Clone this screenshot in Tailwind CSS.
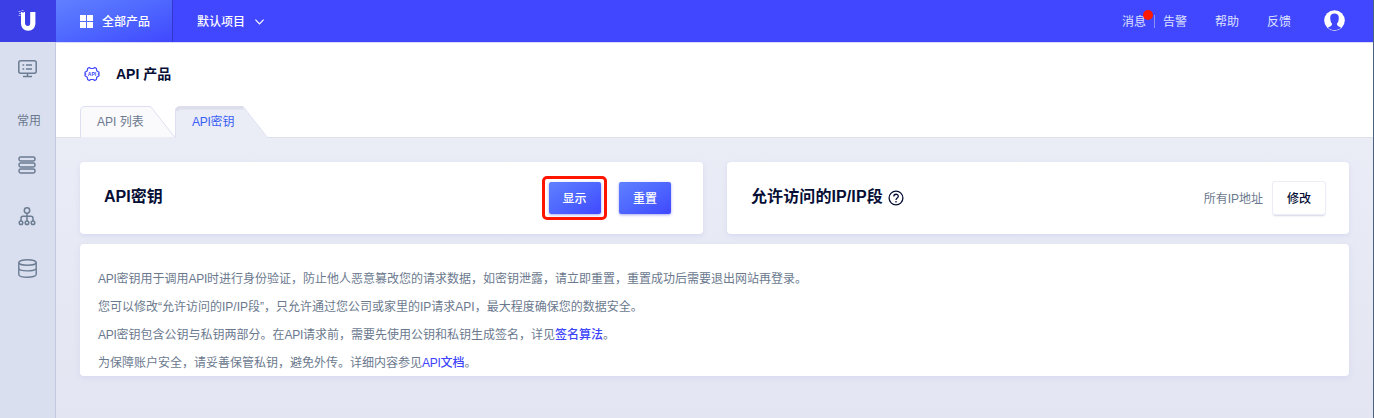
<!DOCTYPE html>
<html lang="zh-CN">
<head>
<meta charset="utf-8">
<title>API 产品</title>
<script src="https://cdn.jsdelivr.net/npm/@tailwindcss/browser@4"></script>
</head>
<body class="relative flex h-[418px] w-[1374px] flex-col overflow-hidden bg-[#e7e9f4] font-['Liberation_Sans','Noto_Sans_CJK_SC',sans-serif] text-[12px] text-[#6b798e]">
<header class="flex h-[42px] shrink-0 items-center bg-[#4147ff] text-white">
  <div class="flex h-full w-14 items-center justify-center bg-[#3c3fe5]">
    <svg width="20" height="24" viewBox="0 0 20 24"><path d="M7.300 3v-0h-4v11.200c0 4.500 3 7.500 7.200 7.500s7.200-3 7.200-7.500V3h-5.200v11c0 1.900-.7 2.900-2.300 2.900S7.300 15.900 7.300 14z" transform="translate(-.3 0)" fill="#fff"/><path d="M.5 2.500h2M3.500 1.500h2M1 4.500h2M4 3.500h2M.5 6.500h2" stroke="#a9adff" stroke-width="1.200"/></svg>
  </div>
  <div class="flex h-full w-[117px] items-center border-r border-[#3437cf] bg-linear-to-br from-[#6080ff] to-[#4147ff] pl-6">
    <svg width="13" height="13" viewBox="0 0 13 13" fill="#fff"><path d="M0 0h6v6H0zM7 0h6v6H7zM0 7h6v6H0zM7 7h6v6H7z"/></svg>
    <span class="ml-[9px] mt-0.5 font-medium">全部产品</span>
  </div>
  <span class="ml-6 mt-0.5 font-medium">默认项目</span>
  <svg class="ml-[10px] mt-0.5" width="9" height="6" viewBox="0 0 9 6" fill="none" stroke="#fff" stroke-width="1.200"><path d="M.4.600l4.100 4.200L8.600.600"/></svg>
  <nav class="ml-auto flex items-center text-[#dfe2ff]">
    <span class="relative mt-0.5">消息<i class="absolute -top-[3px] left-[21px] size-[10px] rounded-full bg-[#ff1a00]"></i></span>
    <i class="ml-2 h-[13px] w-px bg-[#8b90ff]"></i>
    <span class="ml-2 mt-0.5">告警</span><span class="ml-7 mt-0.5">帮助</span><span class="ml-7 mt-0.5">反馈</span>
    <svg class="-mt-px ml-[33px] mr-[29px]" width="21" height="21" viewBox="0 0 21 21"><circle cx="10.500" cy="10.500" r="10.300" fill="#fff"/><path d="M6.200 7.500C6.200 4.500 8 3.400 10.500 3.400s4.300 1.100 4.300 4.100c0 3-.6 5-1.900 6.300.1 2 1.400 2.500 4.300 3.900-1.800 1.500-4.200 2.300-6.700 2.300s-4.900-.8-6.700-2.300c2.900-1.400 4.200-1.900 4.300-3.900-1.300-1.300-1.900-3.300-1.900-6.300z" fill="#4147ff"/></svg>
  </nav>
</header>
<div class="flex min-h-0 flex-1">
  <aside class="flex w-14 shrink-0 flex-col items-center border-r border-[#c3c9e2] bg-[#d9dfee] pt-[18px] pr-px">
    <svg width="19" height="18" viewBox="0 0 19 18" fill="none" stroke="#6b7c93" stroke-width="1.500"><rect x=".8" y=".8" width="17.400" height="12.400" rx="2"/><path d="M9.500 13v3M5 16.500h9M8 5h6M8 9h6M4.500 5h1.700M4.500 9h1.700"/></svg>
    <span class="mt-[34px] ml-1 leading-[18px]">常用</span>
    <svg class="mt-[26px]" width="18" height="18" viewBox="0 0 18 18" fill="none" stroke="#6b7c93" stroke-width="1.500"><rect x="1" y="1" width="16" height="4" rx="1.700"/><rect x="1" y="7" width="16" height="4" rx="1.700"/><rect x="1" y="13" width="16" height="4" rx="1.700"/></svg>
    <svg class="mt-[33px]" width="18" height="19" viewBox="0 0 18 19" fill="none" stroke="#6b7c93" stroke-width="1.500"><circle cx="9" cy="3.500" r="2.700"/><path d="M9 6.500V14M3 14v-2.500Q3 9.300 5 9.300h8q2 0 2 2.200V14"/><circle cx="3" cy="15.800" r="1.800"/><circle cx="9" cy="15.800" r="1.800"/><circle cx="15" cy="15.800" r="1.800"/></svg>
    <svg class="mt-[33px]" width="19" height="19" viewBox="0 0 19 19" fill="none" stroke="#6b7c93" stroke-width="1.400"><ellipse cx="9.500" cy="3.500" rx="8.700" ry="2.800"/><path d="M.8 3.500v12c0 3.600 17.400 3.600 17.400 0v-12M.8 9.300c0 3.400 17.400 3.400 17.400 0"/></svg>
  </aside>
  <main class="min-w-0 flex-1 bg-linear-to-b from-[#eaecf6] from-25% to-[#e3e5f2]">
    <section class="h-24 border-t border-b border-t-[#d9dbf8] border-b-[#dee0ee] bg-white pt-[22px]">
      <h1 class="flex h-[18px] items-center pl-7 text-[14px] font-bold text-[#060e35]">
        <svg class="mr-4" width="16" height="16" viewBox="0 0 16 16" fill="none" stroke="#4147ff"><path d="M3.600 2.500 5.200 1.400 6.800 2.500h2.400l1.600-1.100 1.600 1.100.3 2.200 2.300 1.500v1.200l-.8.600.8.600v1.200l-2.300 1.500-.3 2.200-1.600 1.100-1.600-1.100H6.800l-1.600 1.100-1.600-1.100-.3-2.200L1 9.800V8.600L1.800 8 1 7.400V6.200l2.300-1.500z" stroke-width="1.200" stroke-linejoin="round"/><text x="8" y="9.800" text-anchor="middle" font-size="5" font-weight="700" fill="#4147ff" stroke="none">API</text></svg>
        API 产品
      </h1>
      <div class="mt-[23px] flex h-8 pl-6">
        <div class="relative h-8 w-[95px] pl-[17px] leading-[33px]">
          <svg class="absolute left-0 top-0" width="96" height="32"><path d="M.5 31.500V5Q.5.500 5 .500H70.500L95 31.500" fill="#fafafd" stroke="#dedff0"/></svg>
          <span class="relative">API 列表</span>
        </div>
        <div class="relative h-8 w-[95px] pl-[17px] leading-[33px] text-[#3860f4]">
          <svg class="absolute left-0 top-0" width="94" height="32"><path d="M.5 32V5Q.5.500 5 .500H68L92.500 32z" fill="#eaecf6"/><path d="M.5 31.500V5Q.5.500 5 .500H68L92.500 31.500" fill="none" stroke="#dedff0"/><path d="M2 5Q2 2 5 2H68.500" fill="none" stroke="#dcdeec" stroke-width="3"/></svg>
          <span class="relative"><span class="tracking-[-0.25px]">API</span>密钥</span>
        </div>
      </div>
    </section>
    <div class="flex gap-6 px-6 pt-6 pr-[25px]">
      <section class="flex h-[72px] w-[623px] items-center rounded bg-white pl-6 pr-8 shadow-[0_2px_5px_#d8daf0]">
        <h2 class="mb-[3px] mr-auto text-[16px] font-bold text-[#060e35]">API密钥</h2>
        <div class="mr-3 flex h-11 w-[65px] items-center justify-center rounded-[5px] border-[3px] border-[#ff1500]">
          <button class="h-8 w-[52px] rounded-xs bg-linear-to-br from-[#6080ff] to-[#4147ff] pt-px font-medium text-white shadow-[0_1px_3px_#a7abed]">显示</button>
        </div>
        <button class="h-8 w-[52px] rounded-xs bg-linear-to-br from-[#6080ff] to-[#4147ff] pt-px font-medium text-white shadow-[0_1px_3px_#a7abed]">重置</button>
      </section>
      <section class="flex h-[72px] flex-1 items-center rounded bg-white pl-6 pr-6 shadow-[0_2px_5px_#d8daf0]">
        <h2 class="mb-[3px] text-[16px] font-bold tracking-[0.1px] text-[#060e35]">允许访问的IP/IP段</h2>
        <svg class="ml-[5px] mr-auto" width="16" height="16" viewBox="0 0 16 16" fill="none" stroke="#060e35" stroke-width="1.300"><circle cx="8" cy="8" r="6.900"/><path d="M5.800 6.500C5.800 3.500 10.300 3.600 10.300 6.300 10.300 8 8 8 8 10"/><path d="M8 11v1.400"/></svg>
        <span class="mt-px">所有IP地址</span>
        <button class="ml-[10px] h-8 w-[52px] rounded-xs bg-white pt-px font-medium text-[#060e35] shadow-[0_0_0_1px_#ebecf6,0_2px_2px_#d3d6e8]">修改</button>
      </section>
    </div>
    <section class="ml-6 mr-[25px] mt-[10px] h-[132px] rounded bg-white pl-[18px] pt-[21px] leading-[28px] shadow-[0_2px_6px_#d8daf0]">
      <p><span class="tracking-[-0.3px]">API</span>密钥用于调用<span class="tracking-[-0.3px]">API</span>时进行身份验证，防止他人恶意篡改您的请求数据，如密钥泄露，请立即重置，重置成功后需要退出网站再登录。</p>
      <p>您可以修改“允许访问的IP/IP段”，只允许通过您公司或家里的IP请求API，最大程度确保您的数据安全。</p>
      <p><span class="tracking-[-0.3px]">API</span>密钥包含公钥与私钥两部分。在<span class="tracking-[-0.3px]">API</span>请求前，需要先使用公钥和私钥生成签名，详见<a class="font-medium text-[#3c43fb]">签名算法</a>。</p>
      <p>为保障账户安全，请妥善保管私钥，避免外传。详细内容参见<a class="font-medium text-[#3c43fb]"><span class="tracking-[-0.3px]">API</span>文档</a>。</p>
    </section>
  </main>
</div>
<i class="absolute right-0 top-0 h-full w-px bg-[#49627f]"></i>
</body>
</html>
